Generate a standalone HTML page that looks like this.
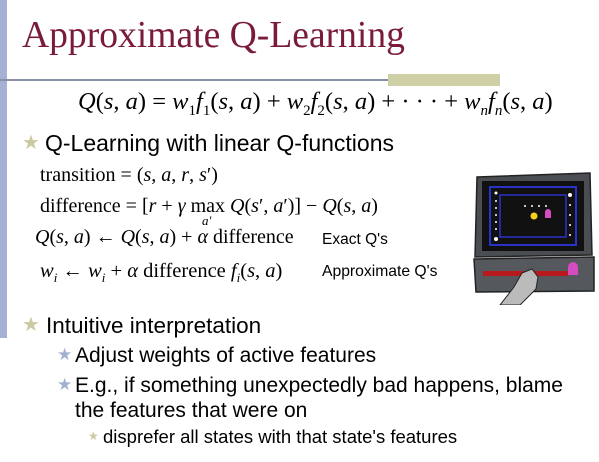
<!DOCTYPE html>
<html><head><meta charset="utf-8"><style>
body{margin:0;width:599px;height:462px;background:#fff;position:relative;overflow:hidden;font-family:"Liberation Sans",sans-serif}
.a{position:absolute;white-space:nowrap;line-height:1}
.s{font-family:"Liberation Serif",serif}
.i{font-style:italic}
.st{position:absolute;line-height:1}
</style></head><body>
<div style="position:absolute;left:0;top:0;width:7px;height:338px;background:#a5b2d6"></div>
<div style="position:absolute;left:0;top:79px;width:500px;height:2px;background:#8a8fa8"></div>
<div style="position:absolute;left:388px;top:74px;width:112px;height:12px;background:#cfd0a6"></div>
<div class="a s" style="left:22px;top:17px;font-size:37.6px;color:#7a1a3c">Approximate Q-Learning</div>
<div class="a s" style="left:78px;top:90px;font-size:24.5px"><i>Q</i>(<i>s</i>, <i>a</i>) = <i>w</i><sub style="font-size:15px">1</sub><i>f</i><sub style="font-size:15px">1</sub>(<i>s</i>, <i>a</i>) + <i>w</i><sub style="font-size:15px">2</sub><i>f</i><sub style="font-size:15px">2</sub>(<i>s</i>, <i>a</i>) + · · · + <i>w<sub style="font-size:15px">n</sub>f<sub style="font-size:15px">n</sub></i>(<i>s</i>, <i>a</i>)</div>
<div class="st" style="left:22px;top:133px;font-size:20px;color:#cdc9a3">★</div>
<div class="a" style="left:45px;top:132px;font-size:23px">Q-Learning with linear Q-functions</div>
<div class="a s" style="left:40px;top:165px;font-size:20px">transition = (<i>s</i>, <i>a</i>, <i>r</i>, <i>s</i>′)</div>
<div class="a s" style="left:40px;top:196px;font-size:20px">difference = [<i>r</i> + <i>γ</i> max <i>Q</i>(<i>s</i>′, <i>a</i>′)] − <i>Q</i>(<i>s</i>, <i>a</i>)</div>
<div class="a s i" style="left:202px;top:214px;font-size:13px">a′</div>
<div class="a s" style="left:35px;top:227px;font-size:20px"><i>Q</i>(<i>s</i>, <i>a</i>) ← <i>Q</i>(<i>s</i>, <i>a</i>) + <i>α</i> difference</div>
<div class="a" style="left:322px;top:232px;font-size:15.5px">Exact Q's</div>
<div class="a s" style="left:40px;top:261px;font-size:20.5px"><i>w<sub style="font-size:13px">i</sub></i> ← <i>w<sub style="font-size:13px">i</sub></i> + <i>α</i> difference <i>f<sub style="font-size:13px">i</sub></i>(<i>s</i>, <i>a</i>)</div>
<div class="a" style="left:322px;top:264px;font-size:15.7px">Approximate Q's</div>
<svg style="position:absolute;left:470px;top:165px" width="129" height="140" viewBox="0 0 129 140">
<path d="M7 12 L120 8 L122 90 L5 92 Z" fill="#4a4d52" stroke="#222" stroke-width="1.5"/>
<rect x="12" y="16" width="102" height="70" fill="#111"/>
<rect x="20" y="22" width="86" height="58" fill="none" stroke="#2a33c8" stroke-width="2"/>
<rect x="30" y="30" width="66" height="42" fill="none" stroke="#2a33c8" stroke-width="1.5"/>
<circle cx="64" cy="51" r="3.5" fill="#f2d21a"/>
<path d="M75 47 a3 3 0 0 1 6 0 v6 h-6 z" fill="#d34cc0"/>
<g fill="#fff"><circle cx="26" cy="28" r="1.5"/><circle cx="26" cy="36" r="1"/><circle cx="26" cy="43" r="1"/><circle cx="26" cy="50" r="1"/><circle cx="26" cy="57" r="1"/><circle cx="26" cy="64" r="1"/><circle cx="26" cy="74" r="2"/><circle cx="100" cy="30" r="2"/><circle cx="100" cy="40" r="1"/><circle cx="100" cy="50" r="1"/><circle cx="100" cy="60" r="1"/><circle cx="100" cy="70" r="1"/><circle cx="55" cy="41" r="1"/><circle cx="62" cy="41" r="1"/><circle cx="69" cy="41" r="1"/><circle cx="76" cy="41" r="1"/></g>
<path d="M4 94 L124 92 L124 126 L6 127 Z" fill="#55585c" stroke="#222" stroke-width="1.5"/>
<rect x="13" y="106" width="85" height="5" fill="#b8191d"/>
<path d="M98 102 a5 5 0 0 1 10 0 v8 h-10 z" fill="#d34cc0"/>
<path d="M52 108 L62 104 L68 112 L66 124 L50 140 L30 140 L44 122 Z" fill="#bbb" stroke="#222"/>
</svg>
<div class="st" style="left:22px;top:315px;font-size:20px;color:#cdc9a3">★</div>
<div class="a" style="left:46px;top:315px;font-size:22.5px">Intuitive interpretation</div>
<div class="st" style="left:57px;top:346px;font-size:17px;color:#a3b0d0">★</div>
<div class="a" style="left:75px;top:345px;font-size:21px">Adjust weights of active features</div>
<div class="st" style="left:57px;top:376px;font-size:17px;color:#a3b0d0">★</div>
<div class="a" style="left:75px;top:375px;font-size:21px">E.g., if something unexpectedly bad happens, blame</div>
<div class="a" style="left:75px;top:400px;font-size:21px">the features that were on</div>
<div class="st" style="left:88px;top:430px;font-size:12px;color:#cdc9a3">★</div>
<div class="a" style="left:103px;top:428px;font-size:18.5px">disprefer all states with that state's features</div>
</body></html>
